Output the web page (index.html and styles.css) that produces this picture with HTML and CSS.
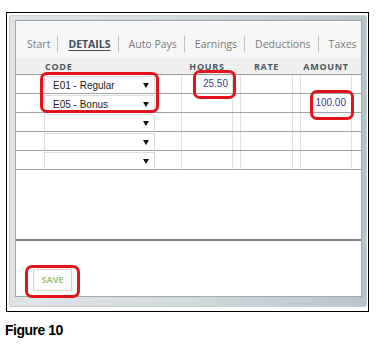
FILE: index.html
```html
<!DOCTYPE html>
<html>
<head>
<meta charset="utf-8">
<link rel="stylesheet" href="styles.css">
</head>
<body>
<div class="figure">
  <div class="window">
    <div class="content">
      <div class="tabs">
        <span class="tab">Start</span>
        <span class="tab active">DETAILS</span>
        <span class="tab">Auto Pays</span>
        <span class="tab">Earnings</span>
        <span class="tab">Deductions</span>
        <span class="tab last">Taxes</span>
      </div>
      <div class="thead">
        <span class="h-code">CODE</span>
        <span class="h-hours">HOURS</span>
        <span class="h-rate">RATE</span>
        <span class="h-amount">AMOUNT</span>
      </div>
      <div class="rows">
        <div class="row">
          <div class="sel"><span class="sel-text">E01 - Regular</span><span class="arrow"></span></div>
          <div class="inp hours">25.50</div>
          <div class="inp rate"></div>
          <div class="inp amount"></div>
        </div>
        <div class="row">
          <div class="sel"><span class="sel-text">E05 - Bonus</span><span class="arrow"></span></div>
          <div class="inp hours"></div>
          <div class="inp rate"></div>
          <div class="inp amount">100.00</div>
        </div>
        <div class="row">
          <div class="sel"><span class="sel-text"></span><span class="arrow"></span></div>
          <div class="inp hours"></div>
          <div class="inp rate"></div>
          <div class="inp amount"></div>
        </div>
        <div class="row">
          <div class="sel"><span class="sel-text"></span><span class="arrow"></span></div>
          <div class="inp hours"></div>
          <div class="inp rate"></div>
          <div class="inp amount"></div>
        </div>
        <div class="row">
          <div class="sel"><span class="sel-text"></span><span class="arrow"></span></div>
          <div class="inp hours"></div>
          <div class="inp rate"></div>
          <div class="inp amount"></div>
        </div>
      </div>
      <div class="spacer"></div>
      <div class="footer">
        <div class="save">SAVE</div>
      </div>
    </div>
  </div>
  <div class="hl hl-code"></div>
  <div class="hl hl-hours"></div>
  <div class="hl hl-amount"></div>
  <div class="hl hl-save"></div>
</div>
<div class="caption">Figure 10</div>
</body>
</html>
```

FILE: styles.css
```css
html, body {
  margin: 0;
  padding: 0;
  background: #ffffff;
}

.figure {
  position: relative;
  box-sizing: border-box;
  width: 363px;
  height: 300px;
  margin: 12px 0 0 6px;
  border: 1px solid #000;
  padding: 2px 0 0 2px;
}

.window {
  box-sizing: border-box;
  width: 358px;
  height: 292px;
  padding: 6px 5px 9px 7px;
  background: linear-gradient(to right, #dfe4e7 0%, #d3dade 50%, #b9c4ca 100%);
  border: 1px solid #c7ced2;
  border-radius: 2px;
}

.content {
  display: flex;
  flex-direction: column;
  height: 100%;
  margin-top: -1px;
  margin-left: -1px;
  background: #ffffff;
  box-shadow: 0 0 0 1px #9ea9af;
}

.tabs {
  display: flex;
  align-items: flex-end;
  height: 37px;
  box-sizing: border-box;
  padding: 0 0 6px 1px;
  background: #f7f7f7;
  white-space: nowrap;
  overflow: hidden;
  font-family: "Open Sans", sans-serif;
  font-size: 10.5px;
  color: #7a7a7a;
}

.tab {
  height: 16px;
  line-height: 16px;
  padding: 0 7px 0 10px;
  border-right: 1px solid #c4c4c4;
}

.tab.last {
  border-right: none;
}

.tab.active {
  font-weight: 700;
  color: #3e4f5a;
  text-decoration: underline;
  text-underline-offset: 2px;
}

.thead {
  display: flex;
  align-items: center;
  height: 16px;
  padding-left: 28px;
  background: #efefef;
  border-bottom: 1px solid #9a9a9a;
  font-family: "Open Sans", sans-serif;
  font-weight: 700;
  font-size: 9px;
  letter-spacing: 0.7px;
  color: #4a5860;
}

.h-code {
  width: 110px;
  padding-left: 1px;
  margin-right: 26px;
}

.h-hours, .h-amount {
  width: 52px;
  text-align: center;
}

.h-rate {
  width: 53px;
  margin: 0 7px;
  text-align: center;
}

.row {
  display: flex;
  height: 18px;
  padding-left: 28px;
  border-bottom: 1px solid #a3a3a3;
  font-family: "Liberation Sans", Arial, sans-serif;
  font-size: 10px;
}

.sel {
  box-sizing: border-box;
  display: flex;
  align-items: center;
  width: 111px;
  height: 17px;
  margin-top: 1px;
  margin-right: 26px;
  padding-left: 8px;
  border: 1px solid #dddddd;
  border-bottom: none;
  background: #ffffff;
  color: #222222;
}

.sel-text {
  flex: 1;
}

.arrow {
  width: 0;
  height: 0;
  margin-right: 5px;
  border-left: 3px solid transparent;
  border-right: 3px solid transparent;
  border-top: 5px solid #111111;
}

.inp {
  box-sizing: border-box;
  width: 52px;
  height: 18px;
  line-height: 18px;
  padding-right: 4px;
  border-left: 1px solid #e1e1e1;
  border-right: 1px solid #e1e1e1;
  text-align: right;
  color: #3b3d8c;
}

.inp.rate {
  width: 53px;
  margin: 0 7px;
}

.inp.amount {
  padding-right: 5px;
}

.spacer {
  flex: 1;
}

.footer {
  height: 57px;
  box-sizing: border-box;
  border-top: 2px solid #76858b;
  padding: 28px 0 0 17px;
}

.save {
  box-sizing: border-box;
  width: 39px;
  height: 22px;
  line-height: 20px;
  border: 1px solid #cfd8bf;
  text-align: center;
  font-family: "Open Sans", sans-serif;
  font-weight: 700;
  font-size: 9px;
  color: #a2c26e;
}

.hl {
  position: absolute;
  box-sizing: border-box;
  border: 3px solid #e3131b;
  border-radius: 7px;
}

.hl-code {
  left: 33px;
  top: 59px;
  width: 119px;
  height: 41px;
}

.hl-hours {
  left: 186px;
  top: 57px;
  width: 43px;
  height: 29px;
}

.hl-amount {
  left: 303px;
  top: 77px;
  width: 44px;
  height: 30px;
}

.hl-save {
  left: 18px;
  top: 252px;
  width: 55px;
  height: 33px;
}

.caption {
  margin: 10px 0 0 5px;
  font-family: "Liberation Sans", Arial, sans-serif;
  font-weight: 700;
  font-size: 14px;
  line-height: 16px;
  letter-spacing: -0.5px;
  color: #000;
}
```
